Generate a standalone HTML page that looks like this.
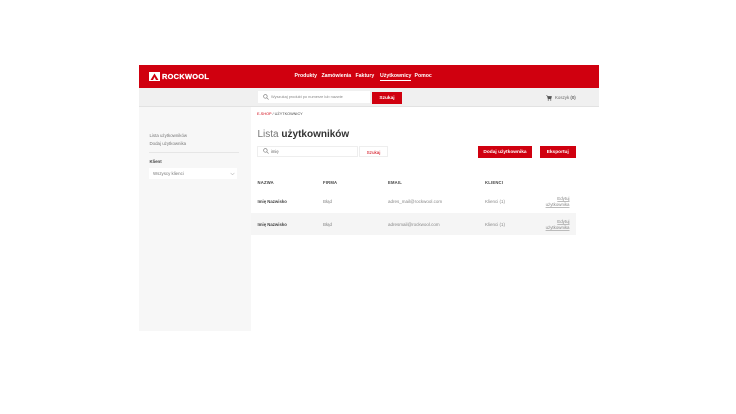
<!DOCTYPE html>
<html lang="pl"><head><meta charset="utf-8"><title>Lista użytkowników</title>
<style>
html,body{margin:0;padding:0;background:#fff}
body{width:736px;height:414px;overflow:hidden;position:relative;font-family:"Liberation Sans",sans-serif;color:#333}
#w{position:absolute;left:0;top:0;width:736px;height:414px;filter:blur(.3px)}
.a{position:absolute;white-space:nowrap;box-sizing:border-box}
.nav{color:#fff;font-size:5.2px;font-weight:bold;top:73px;line-height:7px}
.btn{background:#d0000f;color:#fff;font-weight:bold;font-size:4.8px;display:flex;align-items:center;justify-content:center;padding-top:1.5px}
.th{font-size:4.2px;font-weight:bold;color:#444;top:180px;line-height:5px;letter-spacing:.2px}
.td{font-size:4.5px;color:#888;line-height:5px}
.b{font-weight:bold;color:#444;font-size:4.3px}
.s{font-size:4.4px;color:#777;line-height:6px}
.e{left:535px;width:34.5px;text-align:right;line-height:6px;white-space:normal;color:#888;text-decoration:underline;text-decoration-color:#bbb;font-size:4.4px}
</style></head><body><div id="w">
<div class="a" style="left:139px;top:65px;width:460px;height:23px;background:#d0000f"></div>
<div class="a" style="left:139px;top:88px;width:460px;height:19px;background:#f0f0f0;border-bottom:1px solid #e2e2e2"></div>
<div class="a" style="left:139px;top:107px;width:112px;height:224px;background:#f7f7f7"></div>
<div class="a" style="left:149px;top:71.5px;width:11px;height:9px;background:#fff"></div>
<svg class="a" style="left:149px;top:71.5px" width="11" height="9" viewBox="0 0 11 9"><path d="M5.5 1.5 L1.5 8 H4 L5.5 5 L7 8 H9.5 Z" fill="#d0000f"/></svg>
<div class="a" style="left:162px;top:71.5px;color:#fff;font-weight:bold;font-size:7.4px;line-height:9px;letter-spacing:.3px;-webkit-text-stroke:.25px #fff">ROCKWOOL</div>
<div class="a nav" style="left:294.5px">Produkty</div>
<div class="a nav" style="left:321.5px">Zamówienia</div>
<div class="a nav" style="left:355.5px">Faktury</div>
<div class="a nav" style="left:380px;border-bottom:.6px solid #fff">Użytkownicy</div>
<div class="a nav" style="left:414.5px">Pomoc</div>
<div class="a" style="left:258px;top:91px;width:112px;height:12px;background:#fff"></div>
<svg class="a" style="left:263px;top:94px" width="6" height="6" viewBox="0 0 6 6"><circle cx="2.4" cy="2.4" r="1.8" fill="none" stroke="#777" stroke-width=".6"/><path d="M3.8 3.8 L5.6 5.6" stroke="#777" stroke-width=".6"/></svg>
<div class="a" style="left:271px;top:94px;font-size:3.9px;line-height:6px;color:#888">Wyszukaj produkt po numerze lub nazwie</div>
<div class="a btn" style="left:372px;top:91.5px;width:30px;height:12px">Szukaj</div>
<svg class="a" style="left:546px;top:94.5px" width="6" height="6" viewBox="0 0 6 6"><path d="M.2 .6 H1.2 L2 3.8 H5 L5.6 1.4 H1.4" fill="#555" stroke="#555" stroke-width=".5"/><circle cx="2.3" cy="5" r=".6" fill="#555"/><circle cx="4.7" cy="5" r=".6" fill="#555"/></svg>
<div class="a" style="left:555px;top:94.5px;font-size:4.4px;line-height:6px;color:#666">Koszyk <b>(0)</b></div>
<div class="a" style="left:257px;top:111.5px;font-size:3.8px;line-height:5px;color:#444"><span style="color:#d0000f">E-SHOP</span> / UŻYTKOWNICY</div>
<div class="a" style="left:257.5px;top:127.5px;font-size:10px;line-height:14px;color:#777">Lista <b style="color:#333">użytkowników</b></div>
<div class="a" style="left:257px;top:146px;width:101px;height:11px;background:#fff;border:.5px solid #eee"></div>
<svg class="a" style="left:263px;top:148px" width="6" height="6" viewBox="0 0 6 6"><circle cx="2.4" cy="2.4" r="1.8" fill="none" stroke="#777" stroke-width=".6"/><path d="M3.8 3.8 L5.6 5.6" stroke="#777" stroke-width=".6"/></svg>
<div class="a" style="left:271px;top:148.5px;font-size:4.2px;line-height:6px;color:#666">imię</div>
<div class="a" style="left:359px;top:146px;width:29px;height:11px;border:.5px solid #eee;color:#d0000f;font-size:4.6px;display:flex;align-items:center;justify-content:center;padding-top:1px">Szukaj</div>
<div class="a btn" style="left:478px;top:146px;width:54px;height:11.5px">Dodaj użytkownika</div>
<div class="a btn" style="left:540px;top:146px;width:35.5px;height:11.5px">Eksportuj</div>
<div class="a s" style="left:149.5px;top:132.5px">Lista użytkowników</div>
<div class="a s" style="left:149.5px;top:141px">Dodaj użytkownika</div>
<div class="a" style="left:149px;top:152px;width:90px;height:1px;background:#e6e6e6"></div>
<div class="a" style="left:149.5px;top:159px;font-size:4.4px;line-height:6px;font-weight:bold;color:#444">Klient</div>
<div class="a" style="left:149px;top:168px;width:88px;height:11px;background:#fff"></div>
<div class="a s" style="left:153px;top:171px">Wszyscy klienci</div>
<svg class="a" style="left:230px;top:171.5px" width="5" height="4" viewBox="0 0 5 4"><path d="M.6 1 L2.5 2.8 L4.4 1" fill="none" stroke="#999" stroke-width=".5"/></svg>
<div class="a th" style="left:257.5px">NAZWA</div>
<div class="a th" style="left:323px">FIRMA</div>
<div class="a th" style="left:388px">EMAIL</div>
<div class="a th" style="left:485px">KLIENCI</div>
<div class="a" style="left:251px;top:213px;width:324.5px;height:22px;background:#f5f5f5"></div>
<div class="a td b" style="left:257.5px;top:198.5px">Imię Nazwisko</div>
<div class="a td" style="left:323px;top:198.5px">Błąd</div>
<div class="a td" style="left:388px;top:198.5px">adres_mail@rockwool.com</div>
<div class="a td" style="left:485px;top:198.5px">Klienci (1)</div>
<div class="a td e" style="top:195.5px">Edytuj<br>użytkownika</div>
<div class="a td b" style="left:257.5px;top:222px">Imię Nazwisko</div>
<div class="a td" style="left:323px;top:222px">Błąd</div>
<div class="a td" style="left:388px;top:222px">adresmail@rockwool.com</div>
<div class="a td" style="left:485px;top:222px">Klienci (1)</div>
<div class="a td e" style="top:218.5px">Edytuj<br>użytkownika</div>
</div></body></html>
